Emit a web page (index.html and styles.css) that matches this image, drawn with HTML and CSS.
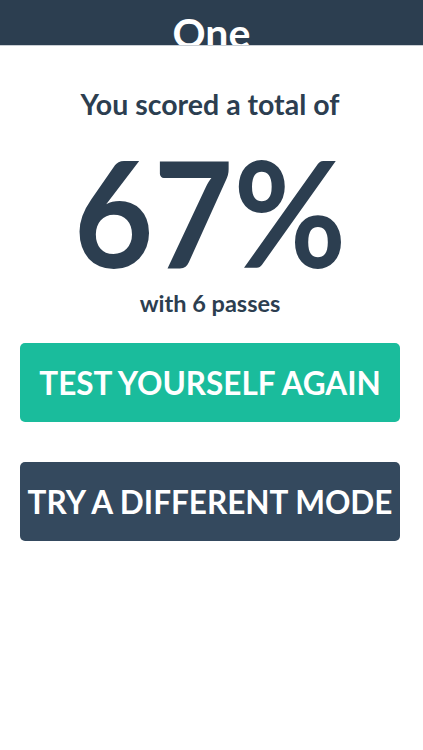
FILE: index.html
```html
<!DOCTYPE html>
<html>
<head>
<meta charset="utf-8">
<link rel="stylesheet" href="styles.css">
</head>
<body>
<header class="topbar"><h1 class="topbar-title">One</h1></header>
<main class="result">
  <p class="result-intro">You scored a total of</p>
  <p class="result-score">67%</p>
  <p class="result-passes">with 6 passes</p>
  <a class="btn btn-primary">TEST YOURSELF AGAIN</a>
  <a class="btn btn-secondary">TRY A DIFFERENT MODE</a>
</main>
</body>
</html>
```
FILE: styles.css
```css
html, body {
  margin: 0;
  padding: 0;
  background: #ffffff;
  font-family: Lato, "Open Sans", sans-serif;
  font-weight: 700;
  color: #2c3e50;
}
.topbar {
  height: 46px;
  background: #2c3e50;
  overflow: hidden;
  border-bottom: 1px solid #c9ced4;
  box-sizing: border-box;
}
.topbar-title {
  margin: 0;
  padding-top: 12px;
  font-size: 41px;
  line-height: 1;
  text-align: center;
  color: #ffffff;
  font-weight: 700;
}
.result {
  display: flex;
  flex-direction: column;
  align-items: stretch;
  padding: 0 23px 0 20px;
  text-align: center;
}
.result-intro {
  margin: 41px 0 0;
  font-size: 28.5px;
  line-height: 1.2;
}
.result-score {
  margin: 16px 0 0;
  font-size: 148px;
  line-height: 1;
  transform: scaleX(0.93);
}
.result-passes {
  margin: 4px 0 0;
  font-size: 23.5px;
  line-height: 1.2;
}
.btn {
  display: flex;
  align-items: center;
  justify-content: center;
  height: 79px;
  border-radius: 5px;
  color: #ffffff;
  font-size: 31.5px;
  white-space: nowrap;
  text-decoration: none;
}
.btn-primary {
  margin-top: 26px;
  background: #1abc9c;
}
.btn-secondary {
  margin-top: 40px;
  background: #34495e;
}
```
